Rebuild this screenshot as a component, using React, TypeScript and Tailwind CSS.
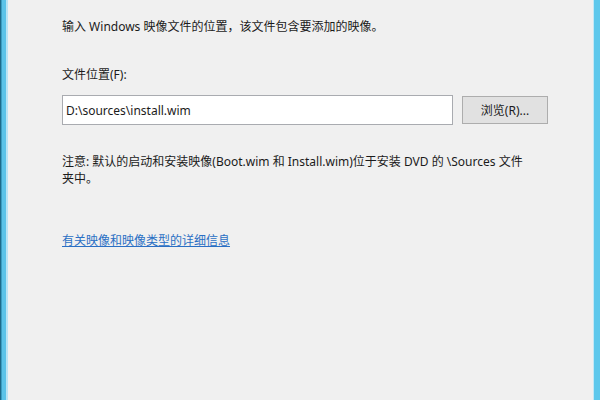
import React from 'react';

const font = { fontFamily: '"Noto Sans", "Noto Sans CJK SC", sans-serif' };

const App: React.FC = () => {
  return (
    <div className="flex h-[400px] w-[600px] overflow-hidden bg-[#f0f0f0] text-[12px] leading-[17px] text-[#1b1b1b]" style={font}>
      {/* left window frame */}
      <div className="flex h-full shrink-0">
        <div className="w-px bg-[#1c6a89]" />
        <div className="w-px bg-[#3a9dc2]" />
        <div className="w-[4px] bg-[#5bc3e8]" />
        <div className="w-[2px] bg-[#b9e4f4]" />
      </div>

      <div className="flex flex-1 flex-col pl-[54px] pt-[18px]">
        <p>输入 Windows 映像文件的位置，该文件包含要添加的映像。</p>

        <label className="mt-[31px]">文件位置(F):</label>

        <div className="mt-[12px] flex items-center gap-[9px]">
          <div className="flex h-[30px] w-[391px] items-center border border-[#a9abb0] bg-white px-[3px]">
            D:\sources\install.wim
          </div>
          <button className="h-[28px] w-[86px] border border-[#adadad] bg-[#e1e1e1] text-[#1b1b1b]">
            浏览(R)...
          </button>
        </div>

        <p className="mt-[28px] w-[490px]">
          注意: 默认的启动和安装映像(Boot.wim 和 Install.wim)位于安装 DVD 的 \Sources 文件
          <br />
          夹中。
        </p>

        <a className="mt-[45px] self-start text-[#2a6fc4] underline" href="#">
          有关映像和映像类型的详细信息
        </a>
      </div>

      {/* right window frame */}
      <div className="flex h-full shrink-0">
        <div className="w-px bg-[#c3e8f6]" />
        <div className="w-[6px] bg-[#5ec8ec]" />
      </div>
    </div>
  );
};

export default App;
